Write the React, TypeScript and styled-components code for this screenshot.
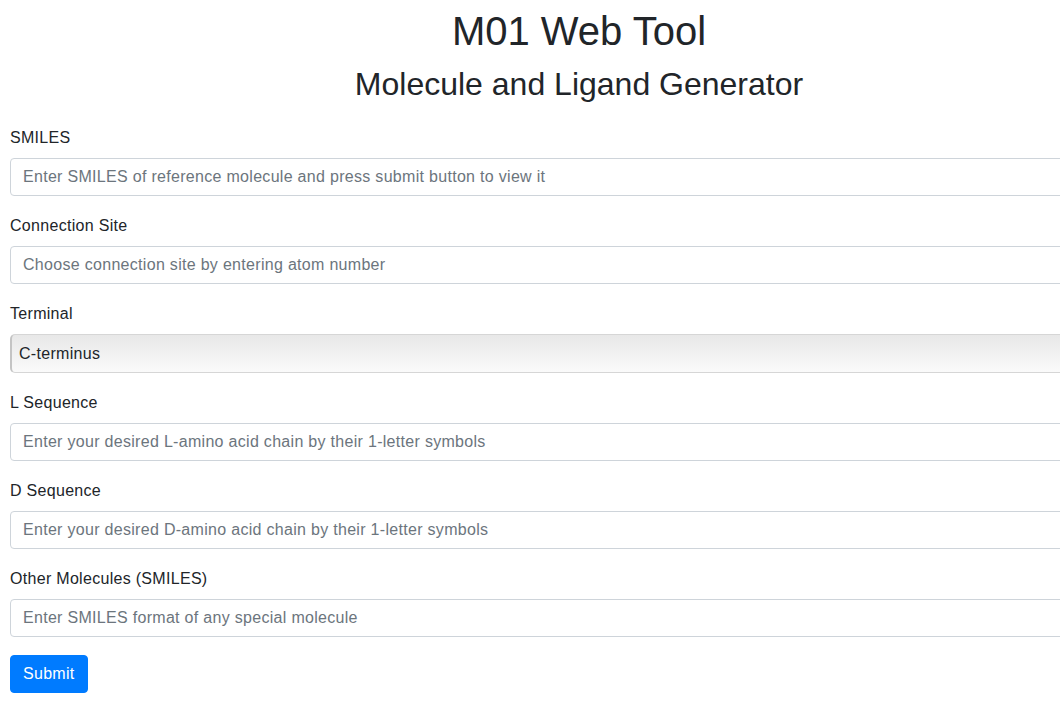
import React from 'react'
import styled, { createGlobalStyle } from 'styled-components'

const GlobalStyle = createGlobalStyle`
  html, body {
    margin: 0;
    padding: 0;
    background: #fff;
    overflow: hidden;
  }
  body {
    font-family: "Liberation Sans", Arial, sans-serif;
    font-size: 16px;
    line-height: 1.5;
    color: #212529;
  }
  * { box-sizing: border-box; }
`

const fields = [
  { label: 'SMILES', placeholder: 'Enter SMILES of reference molecule and press submit button to view it' },
  { label: 'Connection Site', placeholder: 'Choose connection site by entering atom number' },
  { label: 'Terminal', select: ['C-terminus', 'N-terminus'] },
  { label: 'L Sequence', placeholder: 'Enter your desired L-amino acid chain by their 1-letter symbols' },
  { label: 'D Sequence', placeholder: 'Enter your desired D-amino acid chain by their 1-letter symbols' },
  { label: 'Other Molecules (SMILES)', placeholder: 'Enter SMILES format of any special molecule' },
]

export default function App() {
  return (
    <Page>
      <GlobalStyle />
      <Title>M01 Web Tool</Title>
      <Subtitle>Molecule and Ligand Generator</Subtitle>
      <Form onSubmit={(e) => e.preventDefault()}>
        {fields.map((f) => (
          <FormGroup key={f.label}>
            <Label>{f.label}</Label>
            {f.select ? (
              <Select defaultValue={f.select[0]}>
                {f.select.map((o) => (
                  <option key={o}>{o}</option>
                ))}
              </Select>
            ) : (
              <Input type="text" placeholder={f.placeholder} />
            )}
          </FormGroup>
        ))}
        <SubmitButton type="submit">Submit</SubmitButton>
      </Form>
    </Page>
  )
}

const Page = styled.div`
  width: 1138px;
  margin-left: 10px;
  padding-top: 7px;
`

const Title = styled.h1`
  margin: 0 0 10px;
  font-size: 40px;
  font-weight: 500;
  line-height: 1.2;
  text-align: center;
`

const Subtitle = styled.h2`
  margin: 0 0 23px;
  font-size: 32px;
  font-weight: 500;
  line-height: 1.2;
  text-align: center;
`

const Form = styled.form`
  display: flex;
  flex-direction: column;
  align-items: flex-start;
  letter-spacing: 0.3px;
`

const FormGroup = styled.div`
  width: 100%;
  margin-bottom: 18px;
`

const Label = styled.label`
  display: block;
  margin-bottom: 8px;
  font-size: 16px;
  line-height: 24px;
`

const Input = styled.input`
  display: block;
  width: 100%;
  height: 38px;
  padding: 6px 12px;
  font-family: inherit;
  font-size: 16px;
  letter-spacing: inherit;
  color: #495057;
  background: #fff;
  border: 1px solid #ced4da;
  border-radius: 4px;
  outline: none;

  &::placeholder {
    color: #6c757d;
  }
`

const Select = styled.select`
  display: block;
  width: 100%;
  height: 39px;
  padding: 0 7px;
  font-family: inherit;
  font-size: 16px;
  letter-spacing: inherit;
  color: #212529;
  appearance: none;
  background: linear-gradient(#e8e8e8, #fafafa);
  border: 1px solid #d6d6d6;
  border-left: 2px solid #c4c4c4;
  border-radius: 5px;
  outline: none;
`

const SubmitButton = styled.button`
  height: 38px;
  padding: 6px 12px;
  font-family: inherit;
  font-size: 16px;
  letter-spacing: inherit;
  line-height: 24px;
  color: #fff;
  background: #007bff;
  border: 1px solid #007bff;
  border-radius: 4px;
  cursor: pointer;
`
